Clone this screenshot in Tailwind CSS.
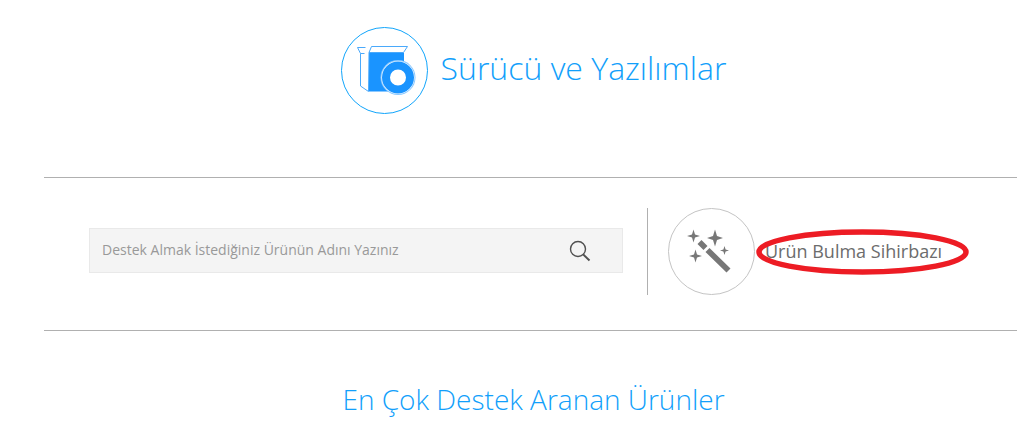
<!DOCTYPE html>
<html lang="tr">
<head>
<meta charset="utf-8">
<meta name="viewport" content="width=device-width, initial-scale=1">
<title>Sürücü ve Yazılımlar</title>
<script src="https://cdn.jsdelivr.net/npm/@tailwindcss/browser@4"></script>
</head>
<body class="bg-white font-['Open_Sans',sans-serif] overflow-x-hidden">
<main class="pl-11">
  <header class="flex items-center justify-center gap-[13px] pt-[27px] pb-[63px] pl-[6px]">
    <svg class="size-[87px] shrink-0" viewBox="0 0 87 87" fill="none" aria-hidden="true">
      <circle cx="43.5" cy="43.5" r="43" stroke="#12a5fb"/>
      <path d="M28 25.500H63V64.500H28Z" fill="#1a94ff"/>
      <path d="M30.500 19.500H66.500L62.500 25.500H28Z" fill="#fff" stroke="#4aa9fb"/>
      <path d="M24.500 20.500H16.500L19.500 26.500V59L27.500 64.500M19.500 26.500H23.500M28 25.500L27.500 64.500" stroke="#4aa9fb"/>
      <circle cx="57" cy="50.500" r="17.500" fill="#8ccaff"/>
      <circle cx="57" cy="50.500" r="16.500" fill="#fff"/>
      <circle cx="57" cy="50.500" r="12" stroke="#1a94ff" stroke-width="8"/>
    </svg>
    <h1 class="text-[32px] leading-[44px] font-light text-[#129ffb] pb-[5px]">Sürücü ve Yazılımlar</h1>
  </header>
  <section class="flex items-center border-y border-[#b0b0b0] pl-[45px] pt-[30px] pb-[35px]">
    <form role="search" class="mb-[2px] flex h-[45px] flex-1 items-center border border-[#e9e9e9] bg-[#f4f4f4]">
      <input type="search" aria-label="Ürün adı" placeholder="Destek Almak İstediğiniz Ürünün Adını Yazınız" class="h-full min-w-0 flex-1 bg-transparent px-3 pb-[2px] text-sm text-[#555] outline-none placeholder:text-[#999]">
      <button type="submit" aria-label="Ara" class="flex h-full w-[84px] items-center justify-center">
        <svg class="size-[22px]" viewBox="0 0 22 22" fill="none" stroke="#505050" aria-hidden="true">
          <circle cx="9" cy="9" r="7.500" stroke-width="1.400"/>
          <path d="M14.300 14.500L20.500 20.500" stroke-width="1.900"/>
        </svg>
      </button>
    </form>
    <div class="ml-6 flex w-[370px] shrink-0 border-l border-[#b0b0b0] pl-5">
      <a href="#" class="flex items-center gap-[10px] text-lg text-[#6c6c6c]">
        <svg class="size-[87px] shrink-0" viewBox="0 0 87 87" fill="#777" aria-hidden="true">
          <circle cx="43.500" cy="43.500" r="43" fill="none" stroke="#c4c4c4"/>
          <path d="M25.500 21.500L27 26.500L32 28L27 29.500L25.500 34.500L24 29.500L19 28L24 26.500ZM47 21.500L49 28L55 30L49 32L47 38.500L45 32L39 30L45 28ZM27.500 41.500L29 46.500L34 48L29 49.500L27.500 54.500L26 49.500L21 48L26 46.500ZM56.500 38L57.600 41.400L61 42.500L57.600 43.600L56.500 47L55.400 43.600L52 42.500L55.400 41.400Z"/>
          <path d="M33.500 32L39.500 38L35.500 42L29.500 36ZM41.500 40L62.500 60.500L58.500 64.500L37.500 44Z"/>
        </svg>
        <span class="relative mb-[2px] whitespace-nowrap">Ürün Bulma Sihirbazı
          <svg class="absolute -left-[9px] -top-[8px] h-[46px] w-[213px]" viewBox="0 0 213 46" fill="none" aria-hidden="true">
            <ellipse cx="106.500" cy="23" rx="103.500" ry="20" stroke="#ed1c24" stroke-width="5.500"/>
          </svg>
        </span>
      </a>
    </div>
  </section>
  <h2 class="pt-12 pl-[6px] text-center text-[28px] leading-[40px] font-light text-[#129ffb]">En Çok Destek Aranan Ürünler</h2>
</main>
</body>
</html>
